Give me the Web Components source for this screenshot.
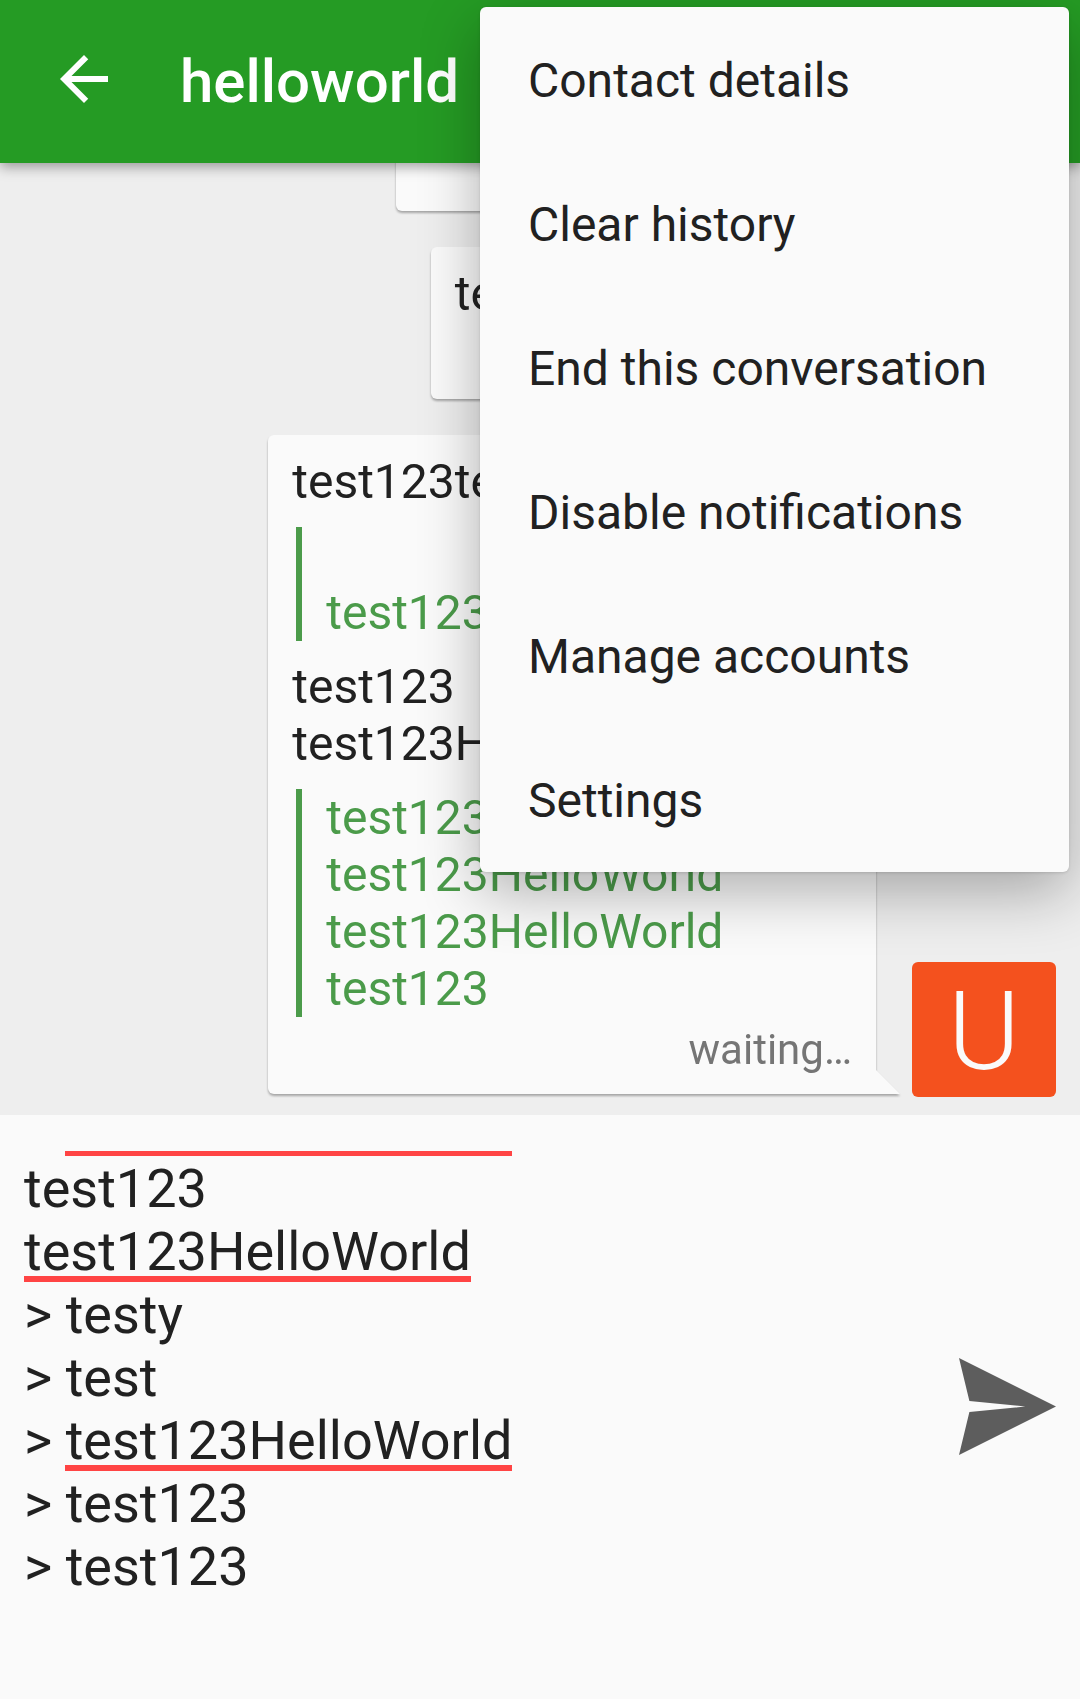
<!DOCTYPE html>
<html lang="en">
<head>
<meta charset="utf-8">
<meta name="viewport" content="width=device-width, initial-scale=1">
<title>helloworld</title>
<style>
  body { margin: 0; font-family: Roboto, "Noto Sans", sans-serif; color: #212121; }
</style>
</head>
<body>
<chat-screen>
  <app-bar slot="bar">helloworld</app-bar>

  <chat-message slot="message" initial="">
    <p>test123HelloWorld y</p>
  </chat-message>
  <chat-message slot="message" initial="">
    <p>test123HelloWorld</p>
  </chat-message>
  <chat-message slot="message" initial="U" status="waiting…">
    <p>test123test123HelloWorld</p>
    <blockquote><br>test123HelloWorld</blockquote>
    <p>test123<br>test123HelloWorld</p>
    <blockquote>test123<br>test123HelloWorld<br>test123HelloWorld<br>test123</blockquote>
  </chat-message>

  <message-composer slot="composer"></message-composer>

  <overflow-menu slot="menu">
    <menu-entry>Contact details</menu-entry>
    <menu-entry>Clear history</menu-entry>
    <menu-entry>End this conversation</menu-entry>
    <menu-entry>Disable notifications</menu-entry>
    <menu-entry>Manage accounts</menu-entry>
    <menu-entry>Settings</menu-entry>
  </overflow-menu>
</chat-screen>

<script>
  class ShadowElement extends HTMLElement {
    constructor() {
      super();
      this.attachShadow({ mode: "open" }).innerHTML = this.constructor.markup;
    }
  }

  class ChatScreen extends ShadowElement {
    static markup = `
      <style>
        :host { display: flex; flex-direction: column; height: 100vh; position: relative; overflow: hidden; background: #eee; }
        main { flex: 1; min-height: 0; display: flex; flex-direction: column; justify-content: flex-end; gap: 33px; padding: 0 24px 18px; overflow: hidden; }
      </style>
      <slot name="bar"></slot>
      <main><slot name="message"></slot></main>
      <slot name="composer"></slot>
      <slot name="menu"></slot>`;
  }

  class AppBar extends ShadowElement {
    static markup = `
      <style>
        :host { display: block; flex: none; position: relative; z-index: 1; background: #259b24; color: #fff; box-shadow: 0 4px 12px rgba(0,0,0,.36); }
        header { display: flex; align-items: center; gap: 60px; height: 158px; padding: 0 48px 5px; }
        button { flex: none; width: 72px; height: 72px; padding: 0; border: 0; background: none; color: inherit; }
        svg { display: block; }
        h1 { margin: 0; padding-top: 6px; font-size: 60px; line-height: 72px; font-weight: 500; white-space: nowrap; }
      </style>
      <header>
        <button type="button" aria-label="Back">
          <svg width="72" height="72" viewBox="0 0 24 24" fill="currentColor" aria-hidden="true">
            <path d="M20 11H7.83l5.59-5.59L12 4l-8 8 8 8 1.41-1.41L7.83 13H20v-2z"/>
          </svg>
        </button>
        <h1><slot></slot></h1>
      </header>`;
  }

  class ChatMessage extends ShadowElement {
    static markup = `
      <style>
        :host { display: flex; flex: none; justify-content: flex-end; align-items: flex-end; gap: 12px; }
        .balloon { display: flex; align-items: flex-end; margin-bottom: 3px; filter: drop-shadow(0 2px 1px rgba(0,0,0,.3)); }
        .bubble { display: flex; flex-direction: column; gap: 8px; padding: 18px 24px 20px; background: #fafafa; border-radius: 6px 6px 0 6px; font-size: 48px; line-height: 57px; }
        .tail { width: 24px; height: 24px; background: #fafafa; clip-path: polygon(0 0, 100% 100%, 0 100%); }
        .content { display: flex; flex-direction: column; gap: 17px; }
        ::slotted(p) { margin: 0; }
        ::slotted(blockquote) { margin: 0 0 0 4px; padding-left: 24px; border-left: 6px solid #4b9b4a; color: #4b9b4a; }
        .status { align-self: flex-end; min-height: 49px; font-size: 42px; line-height: 49px; color: #757575; }
        .avatar { flex: none; box-sizing: border-box; width: 144px; height: 135px; padding-top: 4px; border-radius: 6px; background: #f4511e; color: #fafafa; text-align: center; font-size: 110px; line-height: 131px; font-weight: 300; }
      </style>
      <div class="balloon">
        <div class="bubble">
          <div class="content"><slot></slot></div>
          <span class="status"></span>
        </div>
        <div class="tail"></div>
      </div>
      <span class="avatar"></span>`;
    connectedCallback() {
      this.shadowRoot.querySelector(".status").textContent = this.getAttribute("status") || "";
      this.shadowRoot.querySelector(".avatar").textContent = this.getAttribute("initial");
    }
  }

  class MessageComposer extends ShadowElement {
    static markup = `
      <style>
        :host { display: block; flex: none; background: #fafafa; }
        form { display: flex; align-items: center; gap: 24px; padding: 36px 24px 38px; }
        textarea { flex: 1; min-width: 0; height: 510px; box-sizing: border-box; margin: 0; padding: 0; border: 0; outline: 0; resize: none;
          font: 400 54px/63px Roboto, "Noto Sans", sans-serif; color: #212121; background: none; scrollbar-width: none; }
        button { flex: none; padding: 0; border: 0; background: none; color: #5d5d5d; }
        svg { display: block; }
      </style>
      <form>
        <textarea aria-label="Message" spellcheck="false">&gt; test123HelloWorld
test123
test123HelloWorld
&gt; testy
&gt; test
&gt; test123HelloWorld
&gt; test123
&gt; test123
</textarea>
        <button type="button" aria-label="Send">
          <svg width="97" height="97" viewBox="0 0 98 98" fill="currentColor" aria-hidden="true">
            <path d="M0 0 98 49 0 98 10.500 54.500 67 49 10.500 43.500Z"/>
          </svg>
        </button>
      </form>`;
    connectedCallback() {
      this.box = this.shadowRoot.querySelector("textarea");
      this.box.addEventListener("input", () => this.markUnknownWords());
      this.markUnknownWords();
      this.box.scrollTop = this.box.scrollHeight;
    }
    markUnknownWords() {
      const lineHeight = 63, barTop = 56, barHeight = 6;
      const pen = document.createElement("canvas").getContext("2d");
      pen.font = "54px Roboto, 'Noto Sans', sans-serif";
      const layers = [];
      this.box.value.split("\n").forEach((line, row) => {
        for (const word of line.matchAll(/\w*HelloWorld/g)) {
          const left = Math.floor(pen.measureText(line.slice(0, word.index)).width);
          const width = Math.round(pen.measureText(word[0]).width);
          layers.push(`linear-gradient(#f44, #f44) ${left}px ${row * lineHeight + barTop}px / ${width}px ${barHeight}px no-repeat local`);
        }
      });
      this.box.style.background = layers.join(", ");
    }
  }

  class OverflowMenu extends ShadowElement {
    static markup = `
      <style>
        :host { display: block; position: absolute; z-index: 2; top: 7px; right: 11px; width: 589px; max-width: calc(100% - 22px); border-radius: 6px; background: #fafafa;
          box-shadow: 0 1px 3px rgba(0,0,0,.12), 0 20px 60px rgba(0,0,0,.3); }
        nav { display: flex; flex-direction: column; padding-top: 1px; }
      </style>
      <nav role="menu"><slot></slot></nav>`;
  }

  class MenuEntry extends ShadowElement {
    static markup = `
      <style>
        :host { display: block; }
        button { display: block; width: 100%; height: 144px; padding: 0 48px; border: 0; background: none; text-align: left;
          font: inherit; font-size: 48px; line-height: 57px; color: inherit; white-space: nowrap; }
      </style>
      <button type="button" role="menuitem"><slot></slot></button>`;
  }

  customElements.define("chat-screen", ChatScreen);
  customElements.define("app-bar", AppBar);
  customElements.define("chat-message", ChatMessage);
  customElements.define("message-composer", MessageComposer);
  customElements.define("overflow-menu", OverflowMenu);
  customElements.define("menu-entry", MenuEntry);
</script>
</body>
</html>
